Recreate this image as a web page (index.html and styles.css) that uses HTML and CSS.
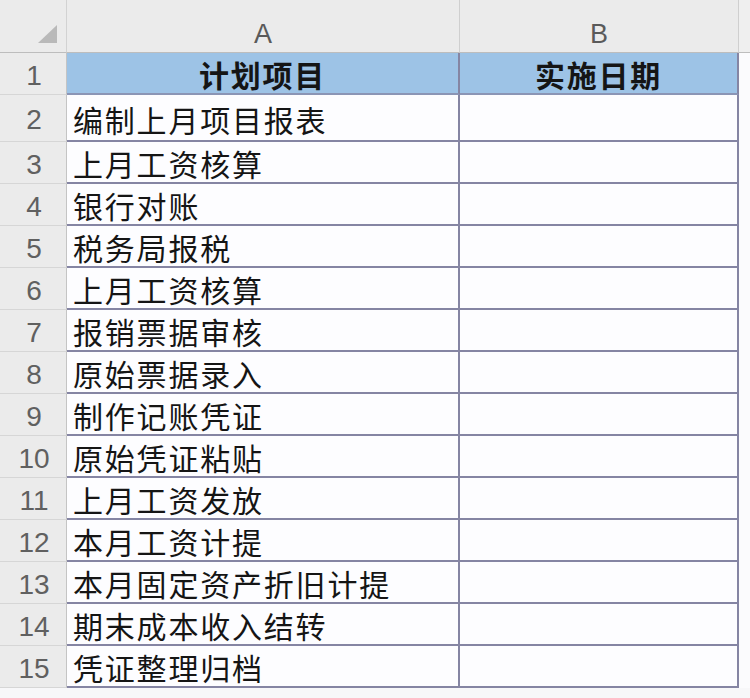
FILE: index.html
```html
<!DOCTYPE html>
<html lang="zh">
<head>
<meta charset="utf-8">
<title>计划项目</title>
<link rel="stylesheet" href="styles.css">
</head>
<body>
<div class="sheet">
  <div class="corner"><span class="tri"></span></div>
  <div class="colhead">A</div>
  <div class="colhead">B</div>
  <div class="colhead extra"></div>

  <div class="rowhead">1</div>
  <div class="cell title">计划项目</div>
  <div class="cell title">实施日期</div>
  <div class="rest"></div>

  <div class="rowhead">2</div><div class="cell">编制上月项目报表</div><div class="cell"></div><div class="rest"></div>
  <div class="rowhead">3</div><div class="cell">上月工资核算</div><div class="cell"></div><div class="rest"></div>
  <div class="rowhead">4</div><div class="cell">银行对账</div><div class="cell"></div><div class="rest"></div>
  <div class="rowhead">5</div><div class="cell">税务局报税</div><div class="cell"></div><div class="rest"></div>
  <div class="rowhead">6</div><div class="cell">上月工资核算</div><div class="cell"></div><div class="rest"></div>
  <div class="rowhead">7</div><div class="cell">报销票据审核</div><div class="cell"></div><div class="rest"></div>
  <div class="rowhead">8</div><div class="cell">原始票据录入</div><div class="cell"></div><div class="rest"></div>
  <div class="rowhead">9</div><div class="cell">制作记账凭证</div><div class="cell"></div><div class="rest"></div>
  <div class="rowhead">10</div><div class="cell">原始凭证粘贴</div><div class="cell"></div><div class="rest"></div>
  <div class="rowhead">11</div><div class="cell">上月工资发放</div><div class="cell"></div><div class="rest"></div>
  <div class="rowhead">12</div><div class="cell">本月工资计提</div><div class="cell"></div><div class="rest"></div>
  <div class="rowhead">13</div><div class="cell">本月固定资产折旧计提</div><div class="cell"></div><div class="rest"></div>
  <div class="rowhead">14</div><div class="cell">期末成本收入结转</div><div class="cell"></div><div class="rest"></div>
  <div class="rowhead">15</div><div class="cell">凭证整理归档</div><div class="cell"></div><div class="rest"></div>
</div>
</body>
</html>
```
FILE: styles.css
```css
* { box-sizing: border-box; }
html, body { margin: 0; padding: 0; }
body {
  width: 750px;
  height: 698px;
  background: #f7f7f9;
  overflow: hidden;
  font-family: "Noto Sans CJK SC", "Liberation Sans", sans-serif;
}
.sheet {
  display: grid;
  grid-template-columns: 67px 393px 279px 11px;
  grid-template-rows: 53px 42px 47px repeat(13, 42px);
}
.corner {
  background: #ebebeb;
  border-right: 1px solid #d2d2d2;
  border-bottom: 1px solid #bdbdbd;
  position: relative;
}
.tri {
  position: absolute;
  left: 38px;
  top: 25px;
  width: 0;
  height: 0;
  border-left: 19px solid transparent;
  border-bottom: 18px solid #b9b9b9;
}
.colhead {
  background: #ebebeb;
  border-right: 1px solid #cfcfcf;
  border-bottom: 1px solid #bdbdbd;
  display: flex;
  align-items: flex-end;
  justify-content: center;
  padding-bottom: 2px;
  font-family: "Liberation Sans", sans-serif;
  font-size: 27px;
  color: #5a5a5a;
}
.colhead.extra { border-right: none; background: #efefef; }
.rowhead {
  background: #ebebeb;
  border-right: 1px solid #c4c4c4;
  border-bottom: 1px solid #d6d6d6;
  display: flex;
  align-items: center;
  justify-content: center;
  padding: 4px 0 0 2px;
  font-family: "Liberation Sans", sans-serif;
  font-size: 28px;
  color: #606060;
}
.cell {
  background: #fdfdff;
  border-right: 2px solid #8585a3;
  border-bottom: 2px solid #8585a3;
  display: flex;
  align-items: center;
  padding: 2px 0 0 6px;
  font-size: 30px;
  letter-spacing: 1.8px;
  color: #151515;
  white-space: nowrap;
}
.cell.title {
  background: #9dc3e6;
  justify-content: center;
  font-weight: 700;
  padding-left: 0;
  border-bottom-color: #8b95b5;
}
.rest { background: #fbfbfd; }
```
